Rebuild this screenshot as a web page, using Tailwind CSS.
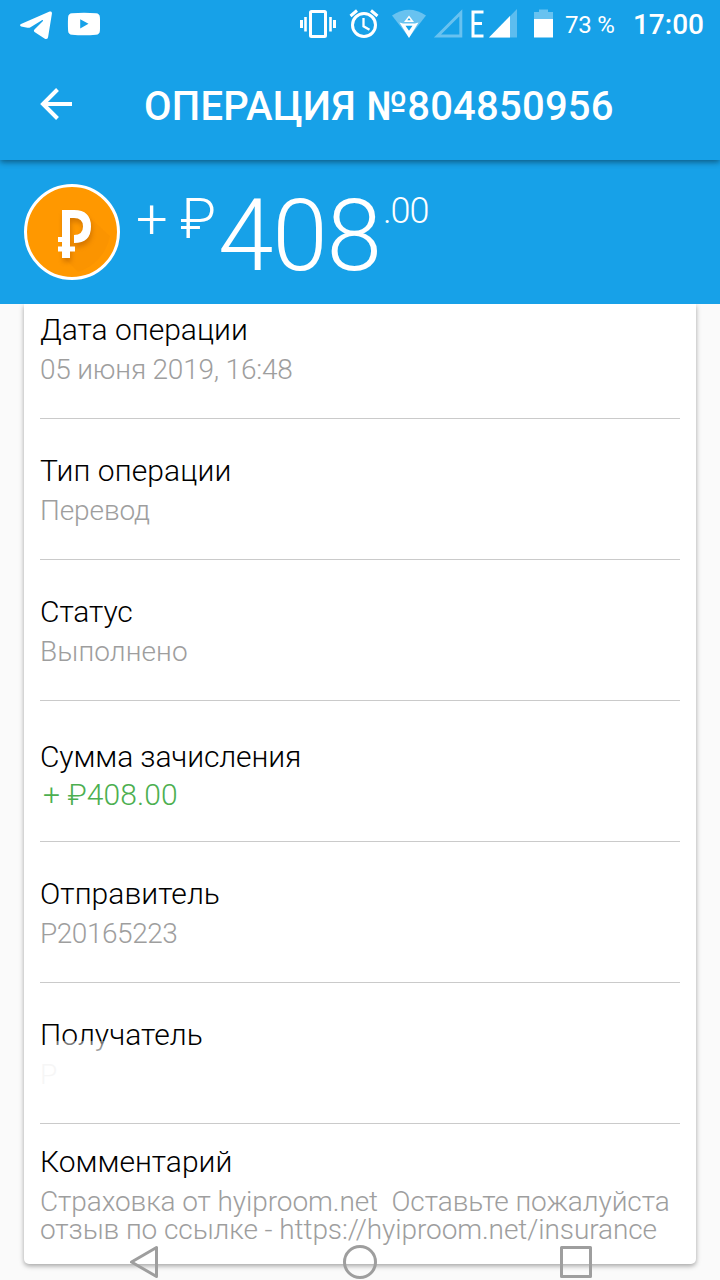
<!DOCTYPE html>
<html lang="ru">
<head>
    <meta charset="UTF-8">
    <meta name="viewport" content="width=device-width, initial-scale=1.0">
    <title>Операция №804850956</title>
    <script src="https://cdn.jsdelivr.net/npm/@tailwindcss/browser@4"></script>
</head>
<body class="bg-[#fafafa] font-['Roboto','Noto_Sans',sans-serif] w-[720px] h-[1280px] overflow-hidden relative">

    <header class="relative z-20 h-40 bg-[#17a1e8] text-white shadow-[0_2px_6px_rgba(0,0,0,0.45)]">
        <!-- status bar -->
        <div class="h-12 flex items-center justify-between pl-5 pr-4">
            <svg class="w-20 h-12" viewBox="20 0 80 48" fill="currentColor">
                <path d="M21 24 49 11.800c2-.8 3.200 0 2.900 2L48.200 36.500c-.3 2.500-1.800 3.100-3.700 1.900l-9.600-6.100c-1.400-1-1.300-2-.2-3.100l7.800-7.800c1-1.200.2-1.800-1-1L30.500 27.200c-1 .7-2 .8-3.100.5l-6.200-1.200c-1.400-.5-1.500-1.800-.2-2.500z"/>
                <path fill-rule="evenodd" d="M72 13.300q12-1 24 0 3.700.3 3.900 4 .4 6.700 0 13.400-.2 3.700-3.900 4-12 1-24 0-3.700-.3-3.900-4-.4-6.700 0-13.400.2-3.700 3.900-4zM80.200 19.200v9.300l8.300-4.700z"/>
            </svg>
            <div class="flex items-center">
                <svg class="w-[254px] h-12" viewBox="300 0 254 48" fill="none" stroke="currentColor">
                    <!-- vibrate -->
                    <rect x="310.500" y="11.500" width="15" height="25" rx="1" stroke-width="3"/>
                    <path d="M301.500 20v8M334.500 20v8" stroke-width="3"/>
                    <path d="M305.500 17v14.500M330.500 17v14.500" stroke-width="2.600"/>
                    <!-- alarm -->
                    <circle cx="364" cy="25" r="11.500" stroke-width="3"/>
                    <path d="M363.500 18v8.300l6 3.400" stroke-width="2.300"/>
                    <path d="M350.500 16l6.500-5.500M371 10.500l6.500 5.500" stroke-width="3"/>
                    <!-- wifi -->
                    <path d="M392 15.500q17-11.500 34 0L409 37.500z" fill="currentColor" fill-opacity=".35" stroke="none"/>
                    <path d="M409 15.500l5 6.500h-10z" fill="currentColor" stroke="none"/>
                    <path d="M399.500 22.500l3.500 1h12l3.500-1L409 38z" fill="currentColor" stroke="none"/>
                    <path d="M405.500 25.800h7l-3.500 5zM407.300 20.300h3.400l-1.700-2.200z" fill="#17a1e8" stroke="none"/>
                    <!-- signal -->
                    <path d="M437.500 36h23.300V12.800z" stroke-opacity=".35" stroke-width="3"/>
                    <path d="M483.500 12H473v24h10.500M473 23.500h9" stroke-width="3"/>
                    <path d="M489 37.500 517 9v28.500z" fill="currentColor" fill-opacity=".3" stroke="none"/>
                    <path d="M489 37.500 510 16v21.500z" fill="currentColor" stroke="none"/>
                    <!-- battery -->
                    <path d="M534 19V12h5V9.500h9V12h5v7z" fill="currentColor" fill-opacity=".35" stroke="none"/>
                    <path d="M534 19h19v18.500h-19z" fill="currentColor" stroke="none"/>
                </svg>
                <span class="ml-[11px] w-[68px] text-[24px] leading-[48px] tracking-[-0.2px] whitespace-nowrap pt-0.5">73 %</span>
                <span class="text-[28px] leading-[48px] font-medium pt-0.5">17:00</span>
            </div>
        </div>
        <!-- toolbar -->
        <div class="h-28 flex items-center">
            <svg class="ml-10 w-8 h-8" viewBox="0 0 32 32" fill="none" stroke="currentColor" stroke-width="4">
                <path d="M32 16H4M17.500 1.500 3 16l14.500 14.500"/>
            </svg>
            <h1 class="ml-[72px] text-[40px] leading-[48px] font-medium tracking-[0.22px] whitespace-nowrap pt-1.5">ОПЕРАЦИЯ №804850956</h1>
        </div>
    </header>

    <section class="relative z-10 h-36 bg-[#17a1e8] text-white flex items-start font-light pl-6">
        <svg class="mt-6 w-24 h-24" viewBox="0 0 96 96">
            <defs>
                <filter id="soft" x="-50%" y="-50%" width="200%" height="200%">
                    <feGaussianBlur stdDeviation="2.500"/>
                </filter>
            </defs>
            <circle cx="48" cy="48" r="46.500" fill="#ff9800" stroke="#fff" stroke-width="3"/>
            <path d="M64 32 86 52Q80 79 54 88L40 74z" fill="#f79000" opacity=".5"/>
            <g id="rub" fill="#a65300" opacity=".45" filter="url(#soft)" transform="translate(1 4)">
                <path d="M38 26h12q17 0 17 16.500T50 59V51q9 0 9-8.500T50 34h-4v40h-8z"/>
            </g>
            <path d="M38 26h12q17 0 17 16.500T50 59v-8q9 0 9-8.500T50 34h-4v40h-8zM34 53h5v5h-5zM34 62.500h17v5H34z" fill="#fff"/>
        </svg>
        <span class="ml-4 mt-[26px] w-[44px] text-[56px] leading-[66px]">+</span>
        <span class="mt-[26px] w-[38px] text-[56px] leading-[66px]">₽</span>
        <span class="mt-[17px] w-[165px] text-[100px] leading-[118px] tracking-[-1.2px]">408</span>
        <span class="mt-[30px] text-[36px] leading-[42px] tracking-[-1px]">.00</span>
    </section>

    <main class="mx-6 h-[960px] px-4 bg-white rounded-b-[5px] shadow-[0_2px_5px_rgba(0,0,0,0.35)] font-light text-[30px] leading-[40px] text-black">
        <div class="h-[115px] pt-1.5 border-b border-[#cacaca]">
            <h2>Дата операции</h2>
            <p class="text-[28px] leading-[40px] tracking-[-0.21px] text-[#9e9e9e]">05 июня 2019, 16:48</p>
        </div>
        <div class="h-[141px] pt-8 border-b border-[#cacaca]">
            <h2 class="tracking-[0.1px]">Тип операции</h2>
            <p class="text-[28px] leading-[40px] tracking-[-0.1px] text-[#9e9e9e]">Перевод</p>
        </div>
        <div class="h-[141px] pt-8 border-b border-[#cacaca]">
            <h2 class="tracking-[-0.1px]">Статус</h2>
            <p class="text-[28px] leading-[40px] tracking-[0.1px] text-[#9e9e9e]">Выполнено</p>
        </div>
        <div class="h-[141px] pt-9 border-b border-[#cacaca]">
            <h2 class="tracking-[-0.12px]">Сумма зачисления</h2>
            <p class="pl-[3px] leading-[36px] tracking-[0.1px] text-[#4caf50]">+ ₽408.00</p>
        </div>
        <div class="h-[141px] pt-8 border-b border-[#cacaca]">
            <h2 class="tracking-[0.05px]">Отправитель</h2>
            <p class="text-[28px] leading-[40px] tracking-[-0.45px] text-[#9e9e9e]">P20165223</p>
        </div>
        <div class="relative h-[141px] pt-8 border-b border-[#cacaca]">
            <h2 class="tracking-[0.05px]">Получатель</h2>
            <p class="text-[28px] leading-[40px] text-[#f6f6f6]">P</p>
            <!-- fades the lower edge of the name -->
            <div class="absolute left-4 top-[58px] w-[52px] h-4 bg-linear-to-b from-white/40 to-white/80"></div>
        </div>
        <div class="pt-[18px]">
            <h2>Комментарий</h2>
            <p class="pt-1.5 text-[28px] leading-[28px] tracking-[-0.085px] text-[#9e9e9e] whitespace-pre">Страховка от hyiproom.net  Оставьте пожалуйста
отзыв по ссылке - https://hyiproom.net/insurance</p>
        </div>
    </main>

    <!-- system navigation, drawn over the page -->
    <nav class="absolute z-30 inset-x-0 bottom-0 h-9 text-[#9e9e9e]">
        <svg class="w-[720px] h-9" viewBox="0 1244 720 36" fill="none" stroke="currentColor" stroke-width="3" stroke-linejoin="round">
            <path d="M156.500 1247.500v29L131.500 1262z"/>
            <circle cx="360" cy="1262" r="15.500"/>
            <rect x="561.500" y="1247.500" width="29" height="29"/>
        </svg>
    </nav>

</body>
</html>
